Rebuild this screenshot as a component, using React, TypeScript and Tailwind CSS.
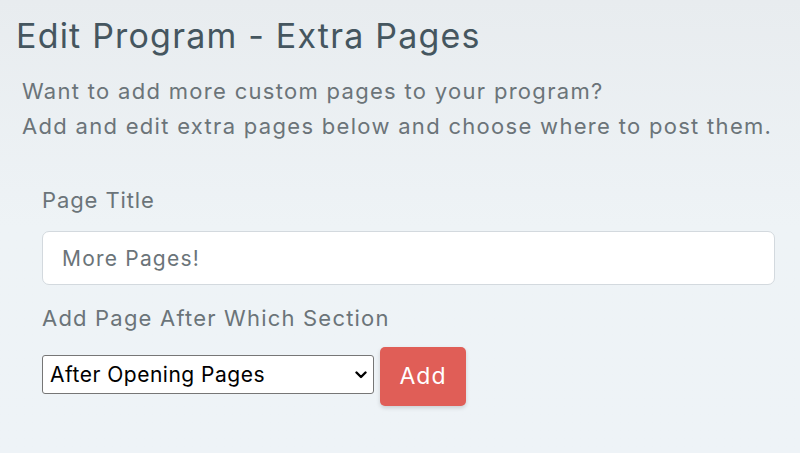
import React, { useState } from 'react';

export default function App() {
  const [title, setTitle] = useState('More Pages!');
  const [section, setSection] = useState('opening');

  return (
    <div
      className="min-h-screen w-full bg-gradient-to-b from-[#e8ecef] via-[#eef3f6] to-[#eef3f7] pt-[14px] text-[#45565f]"
      style={{ fontFamily: 'Inter, "Noto Sans", sans-serif' }}
    >
      <h1 className="pl-[16px] text-[34px] leading-[44px] tracking-[1.2px] font-normal text-[#45565f]">
        Edit Program - Extra Pages
      </h1>

      <div className="mt-[16px] pl-[22px] text-[22px] leading-[35px] tracking-[1.3px] text-[#6b7479]">
        <p>Want to add more custom pages to your program?</p>
        <p>Add and edit extra pages below and choose where to post them.</p>
      </div>

      <form className="mt-[42px] pl-[42px] pr-[25px]" onSubmit={(e) => e.preventDefault()}>
        <label className="block text-[22px] leading-[28px] tracking-[0.9px] text-[#6b7479]">Page Title</label>
        <input
          type="text"
          value={title}
          onChange={(e) => setTitle(e.target.value)}
          className="mt-[17px] block h-[54px] w-full rounded-[7px] border border-[#d3d9de] bg-white px-[19px] text-[21px] tracking-[1.2px] text-[#6b7479] outline-none"
        />

        <label className="mt-[19px] block text-[22px] leading-[28px] tracking-[1.2px] text-[#6b7479]">
          Add Page After Which Section
        </label>

        <div className="mt-[15px] flex items-start gap-[6px]">
          <div className="relative mt-[8px]">
            <select
              value={section}
              onChange={(e) => setSection(e.target.value)}
              className="block h-[39px] w-[332px] appearance-none rounded-[3px] border border-[#767676] bg-white pl-[7px] pr-[30px] text-[21px] tracking-[0.5px] text-black outline-none"
            >
              <option value="opening">After Opening Pages</option>
              <option value="middle">After Middle Pages</option>
              <option value="closing">After Closing Pages</option>
            </select>
            <svg
              className="pointer-events-none absolute right-[7px] top-1/2 -translate-y-1/2"
              width="12"
              height="8"
              viewBox="0 0 12 8"
              fill="none"
            >
              <path d="M1.5 1.5 L6 6 L10.5 1.5" stroke="#000" strokeWidth="2.4" strokeLinecap="round" strokeLinejoin="round" />
            </svg>
          </div>
          <button
            type="submit"
            className="h-[59px] w-[86px] rounded-[5px] bg-[#e05e57] text-[23px] tracking-[1px] text-white shadow-[0_2px_4px_rgba(0,0,0,0.15)]"
          >
            Add
          </button>
        </div>
      </form>
    </div>
  );
}
